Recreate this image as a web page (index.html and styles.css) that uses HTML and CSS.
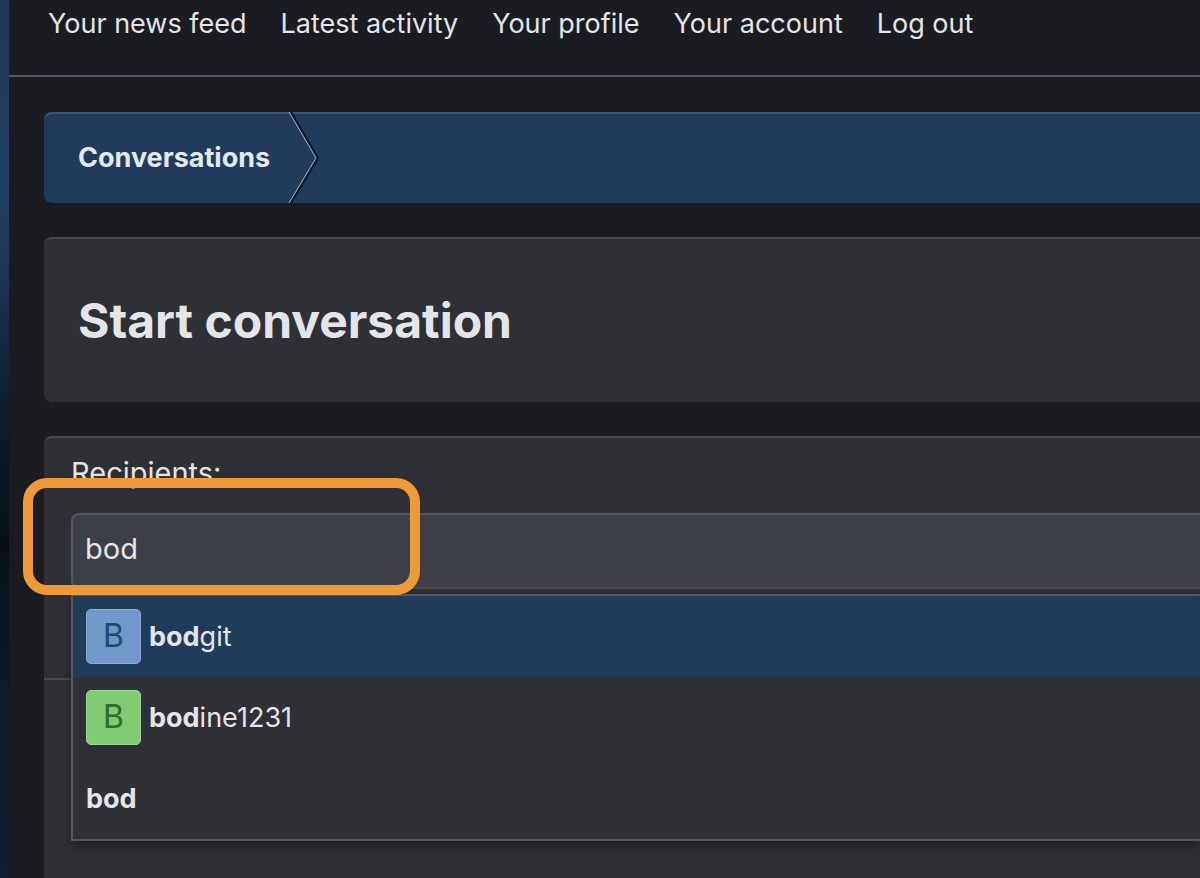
FILE: index.html
```
<!DOCTYPE html>
<html lang="en">
<head>
    <meta charset="UTF-8">
    <meta name="viewport" content="width=device-width, initial-scale=1.0">
    <title>Start conversation</title>
    <link rel="stylesheet" href="styles.css">
</head>
<body>
    <div class="page">
        <nav class="account-nav">
            <a href="#">Your news feed</a>
            <a href="#">Latest activity</a>
            <a href="#">Your profile</a>
            <a href="#">Your account</a>
            <a href="#">Log out</a>
        </nav>
        <main class="content">
            <nav class="breadcrumb">
                <a href="#">Conversations</a>
                <svg class="chevron" viewBox="0 0 32 91" fill="none">
                    <path d="M3 0 L30 46 L3 91" stroke="#0c1829" stroke-width="2"/>
                    <path d="M1 0 L28 46 L1 91" stroke="#a3b0c0" stroke-width="1"/>
                </svg>
            </nav>
            <header class="block title-block">
                <h1>Start conversation</h1>
            </header>
            <form class="block form-block">
                <div class="form-row">
                    <label for="recipients">Recipients:</label>
                    <div class="field">
                        <input type="text" id="recipients" class="text-input" value="bod" autocomplete="off">
                        <ul class="suggestions">
                            <li class="selected"><span class="avatar avatar-blue">B</span><span><b>bod</b>git</span></li>
                            <li><span class="avatar avatar-green">B</span><span><b>bod</b>ine1231</span></li>
                            <li><b>bod</b></li>
                        </ul>
                    </div>
                    <div class="highlight"></div>
                </div>
                <div class="form-row"></div>
            </form>
        </main>
    </div>
</body>
</html>
```

FILE: styles.css
```
* {
    box-sizing: border-box;
}
body {
    margin: 0;
    height: 100vh;
    overflow: hidden;
    padding-left: 9px;
    font-family: Inter, 'Liberation Sans', sans-serif;
    font-size: 27px;
    line-height: 36px;
    color: #e4e5e9;
    background: linear-gradient(#203754, #233f66 20%, #20395b 28%, #0e1b2a 48%, #080f18 62%, #0d1a29 78%, #141e33);
}
a {
    color: inherit;
    text-decoration: none;
}
.page {
    height: 100%;
    display: flex;
    flex-direction: column;
    background: #1b1c21;
}
.account-nav {
    display: flex;
    gap: 34px;
    padding: 6px 39px 33px;
    border-bottom: 2px solid #515560;
}
.content {
    flex: 1;
    display: flex;
    flex-direction: column;
    gap: 34px;
    padding: 35px 0 0 35px;
}
.breadcrumb {
    display: flex;
    align-items: center;
    gap: 18px;
    padding-left: 34px;
    background: #213b5a;
    border-radius: 8px 0 0 8px;
    box-shadow: inset 0 2px #40546e;
    font-weight: 700;
    color: #e3e9f2;
}
.chevron {
    width: 32px;
    height: 91px;
}
.block {
    background: #2f3035;
    border-top: 2px solid #484a50;
    border-radius: 8px 0 0 8px;
}
.title-block {
    padding: 51px 34px 50px;
}
h1 {
    margin: 0;
    font-size: 48px;
    line-height: 62px;
}
.form-block {
    flex: 1;
    border-bottom-left-radius: 0;
}
.form-row {
    position: relative;
    padding: 17px 0 89px 27px;
}
.form-row + .form-row {
    border-top: 2px solid #484a54;
}
.form-row label {
    display: block;
    margin-bottom: 22px;
    font-size: 29px;
}
.field {
    position: relative;
}
.text-input {
    display: block;
    width: 100%;
    height: 76px;
    padding: 0 12px 6px;
    font: inherit;
    font-size: 29px;
    color: inherit;
    background: #3e4049;
    border: 2px solid #545761;
    border-right: 0;
    border-bottom-color: #484a50;
    border-radius: 8px 0 0 8px;
    outline: none;
}
.suggestions {
    position: absolute;
    z-index: 1;
    top: 100%;
    left: 0;
    right: 0;
    margin: 5px 0 0;
    padding: 0;
    list-style: none;
    background: #2f3035;
    border: 2px solid #545761;
    border-right: 0;
    box-shadow: 0 6px 12px rgba(0, 0, 0, 0.35);
}
.suggestions li {
    display: flex;
    align-items: center;
    gap: 8px;
    height: 81px;
    padding: 0 13px;
}
.suggestions li.selected {
    background: #213b5a;
}
.avatar {
    width: 55px;
    height: 55px;
    padding-bottom: 2px;
    display: flex;
    align-items: center;
    justify-content: center;
    border: 1px solid;
    border-radius: 5px;
    font-size: 32px;
}
.avatar-blue {
    color: #264673;
    background: #7198cb;
    border-color: #8aabd6;
}
.avatar-green {
    color: #2f6b2a;
    background: #80cc74;
    border-color: #9bd891;
}
/* callout ring over the recipients field */
.highlight {
    position: absolute;
    z-index: 2;
    top: 40px;
    left: -21px;
    width: 397px;
    height: 117px;
    border: 10px solid #ee9a38;
    border-radius: 24px;
    pointer-events: none;
}
```
